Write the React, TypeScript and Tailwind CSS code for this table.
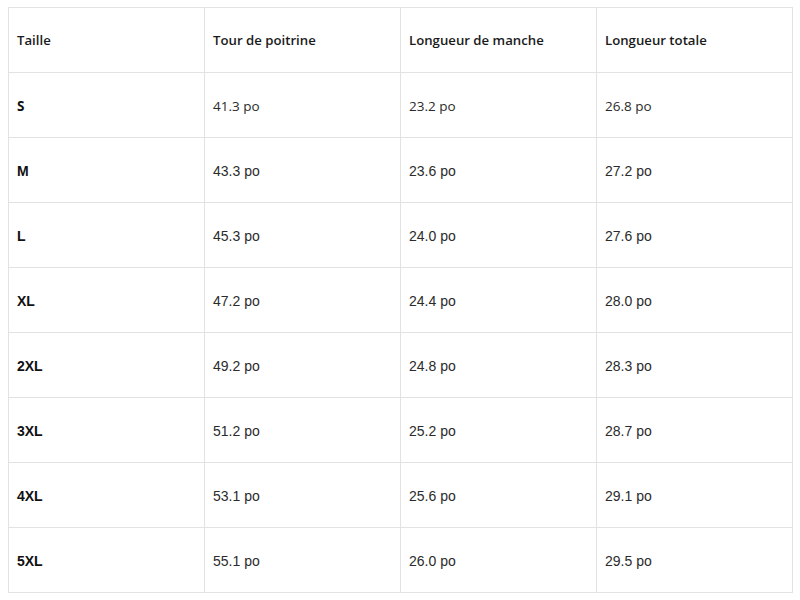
const rows = [
  ["S", "41.3 po", "23.2 po", "26.8 po"],
  ["M", "43.3 po", "23.6 po", "27.2 po"],
  ["L", "45.3 po", "24.0 po", "27.6 po"],
  ["XL", "47.2 po", "24.4 po", "28.0 po"],
  ["2XL", "49.2 po", "24.8 po", "28.3 po"],
  ["3XL", "51.2 po", "25.2 po", "28.7 po"],
  ["4XL", "53.1 po", "25.6 po", "29.1 po"],
  ["5XL", "55.1 po", "26.0 po", "29.5 po"],
];

const headers = ["Taille", "Tour de poitrine", "Longueur de manche", "Longueur totale"];

export default function App() {
  return (
    <div className="w-[800px] h-[600px] bg-white pl-[8px] pt-[7px]">
      <div className="w-[785px] grid grid-cols-[196px_196px_196px_196px] border-t border-l border-[#e2e2e2]">
        {headers.map((h) => (
          <div
            key={h}
            className="h-[65px] border-r border-b border-[#e2e2e2] flex items-center pl-[8px] pt-[2px] text-[13.2px] font-semibold text-[#1a1a1a] font-['Open_Sans',sans-serif]"
          >
            {h}
          </div>
        ))}
        {rows.map((r, i) =>
          r.map((c, j) => (
            <div
              key={`${i}-${j}`}
              className={`h-[65px] border-r border-b border-[#e2e2e2] flex items-center pl-[8px] pt-[2px] ${
                i === 0
                  ? "text-[13.5px] font-['Open_Sans',sans-serif]"
                  : "text-[14px] font-['Liberation_Sans',Arial,sans-serif]"
              } ${j === 0 ? "font-bold text-[#111111]" : "text-[#2b2b2b]"}`}
            >
              {c}
            </div>
          ))
        )}
      </div>
    </div>
  );
}
